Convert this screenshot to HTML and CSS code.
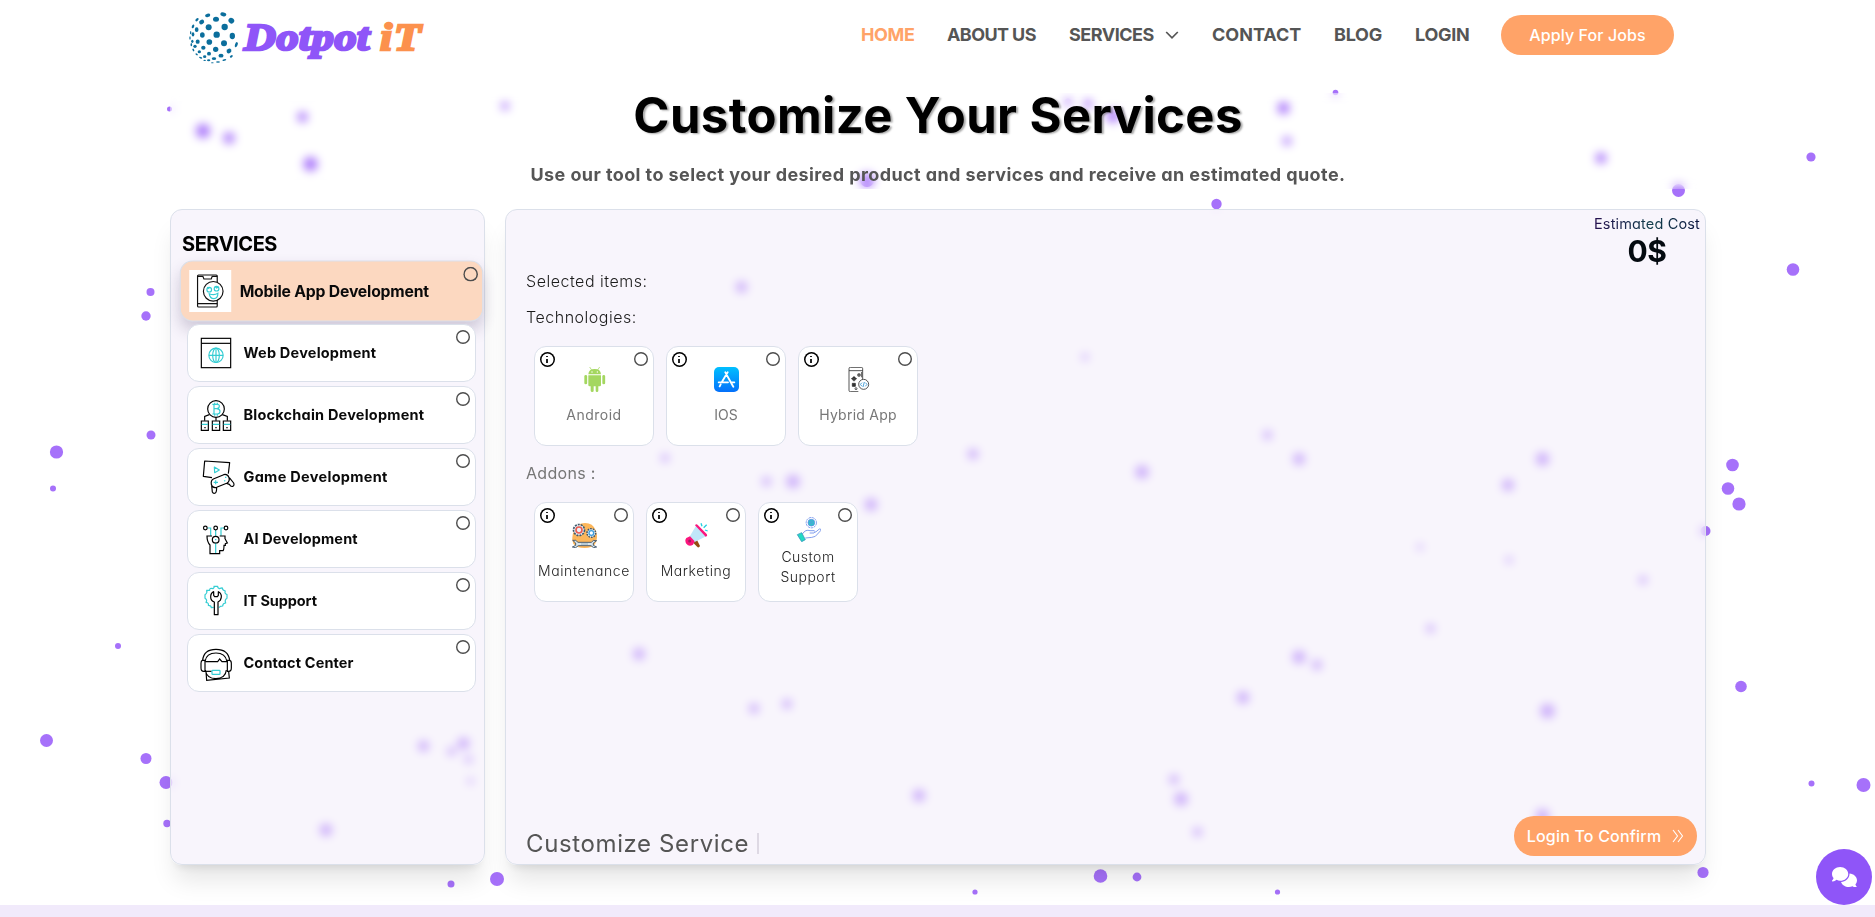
FILE: index.html
```html
<!DOCTYPE html>
<html lang="en">
<head>
<meta charset="utf-8">
<title>Dotpot iT - Customize Your Services</title>
<link rel="stylesheet" href="styles.css">
</head>
<body>
<svg class="particles" viewBox="0 0 1875 905" aria-hidden="true">
<circle cx="169.500" cy="109" r="2.500"/><circle cx="203" cy="131" r="7"/><circle cx="229" cy="138" r="5.5"/><circle cx="302.500" cy="117" r="5"/><circle cx="310.500" cy="164" r="7"/><circle cx="505" cy="106" r="3.7"/>
<circle cx="1068" cy="102" r="3.5"/><circle cx="1088" cy="104" r="4.3"/><circle cx="1113" cy="116" r="6.5"/><circle cx="1283.500" cy="108" r="6"/><circle cx="1287" cy="141" r="4"/><circle cx="867" cy="180" r="7"/><circle cx="1216.500" cy="204" r="5.2"/>
<circle cx="1335.500" cy="92.500" r="2.800"/><circle cx="1601" cy="158" r="5.3"/><circle cx="1678.500" cy="190.500" r="6.5"/><circle cx="1811" cy="157" r="4.6"/><circle cx="1793" cy="269.500" r="6.3"/>
<circle cx="150.500" cy="292" r="4"/><circle cx="146" cy="316" r="4.7"/><circle cx="151" cy="435" r="4.5"/><circle cx="56.500" cy="452" r="6.6"/><circle cx="53" cy="488.500" r="3"/><circle cx="118" cy="646" r="3"/><circle cx="46.500" cy="740.500" r="6.5"/><circle cx="146" cy="758.500" r="5.5"/><circle cx="166" cy="782.500" r="6.5"/><circle cx="167" cy="823.500" r="3.7"/><circle cx="451" cy="884" r="3.5"/><circle cx="497" cy="879" r="7"/>
<circle cx="1732.500" cy="465" r="6.3"/><circle cx="1728" cy="488.500" r="6.3"/><circle cx="1739" cy="504" r="6.6"/><circle cx="1705.500" cy="531" r="5"/><circle cx="1741" cy="686.500" r="5.8"/><circle cx="1811.500" cy="783.500" r="3"/><circle cx="1863.500" cy="785" r="7"/><circle cx="1703" cy="872.500" r="5.6"/><circle cx="1100.500" cy="876" r="6.8"/><circle cx="1137" cy="877" r="4.4"/><circle cx="975" cy="892" r="2.6"/><circle cx="1277.500" cy="892" r="2.6"/>
<circle cx="423.500" cy="746" r="5.5"/><circle cx="463.500" cy="743.500" r="6"/><circle cx="451.500" cy="751.500" r="4.2"/><circle cx="468.500" cy="759.500" r="3.7"/><circle cx="470.500" cy="781" r="3"/><circle cx="326" cy="830" r="6.2"/>
<circle cx="741.500" cy="287" r="5.7"/><circle cx="665" cy="458" r="4"/><circle cx="766.500" cy="481.500" r="4.6"/><circle cx="793" cy="481.500" r="6.8"/><circle cx="871" cy="504.500" r="6.3"/><circle cx="973" cy="454" r="5.3"/><circle cx="1085" cy="357" r="3.3"/><circle cx="1142" cy="472" r="6.8"/><circle cx="1267.500" cy="435" r="4.5"/><circle cx="1299" cy="459" r="6"/><circle cx="1542.500" cy="459" r="6.7"/><circle cx="1508" cy="485" r="6"/><circle cx="1420" cy="547" r="3"/><circle cx="1509" cy="560" r="3.3"/><circle cx="1643" cy="580" r="4"/><circle cx="1430.500" cy="628.500" r="4.2"/><circle cx="1299" cy="657" r="6.6"/><circle cx="1317" cy="665" r="5"/><circle cx="1243" cy="697.500" r="6.2"/><circle cx="1547.500" cy="711" r="7.3"/><circle cx="639" cy="654" r="6"/><circle cx="754" cy="708.500" r="5"/><circle cx="787" cy="704" r="4.8"/><circle cx="919" cy="795.500" r="6.2"/><circle cx="1174" cy="779.500" r="4.8"/><circle cx="1181" cy="799" r="6.8"/><circle cx="1197.500" cy="832" r="4.5"/><circle cx="1542.500" cy="816" r="7"/>
</svg>

<header class="site-header">
  <a class="logo" href="#">
    <svg class="logo-mark" viewBox="84 30 156 162" aria-hidden="true">
      <g fill="#0b6e9c">
      <ellipse cx="190" cy="43" rx="9" ry="6" transform="rotate(15 190 43)"/><ellipse cx="143" cy="46" rx="8" ry="5" transform="rotate(-15 143 46)"/><ellipse cx="168" cy="58" rx="9" ry="7.500"/><ellipse cx="214" cy="62" rx="9" ry="8" transform="rotate(40 214 62)"/><ellipse cx="111" cy="59" rx="6" ry="3.500" transform="rotate(-45 111 59)"/><ellipse cx="125" cy="66" rx="8" ry="6.500" transform="rotate(-35 125 66)"/><circle cx="146" cy="82" r="9"/><circle cx="194" cy="81" r="9.500"/><ellipse cx="99" cy="79" rx="3.500" ry="6" transform="rotate(20 99 79)"/><ellipse cx="110" cy="89" rx="5.500" ry="7"/><ellipse cx="92" cy="98" rx="2" ry="5"/><ellipse cx="99" cy="103" rx="4" ry="6.500"/><ellipse cx="127" cy="105" rx="7" ry="8"/><circle cx="170" cy="104" r="9.500"/><ellipse cx="217" cy="108" rx="8" ry="9.500"/><ellipse cx="90" cy="114" rx="2" ry="5"/><ellipse cx="113" cy="125" rx="6" ry="6.500"/><circle cx="148" cy="126" r="8.500"/><circle cx="192" cy="130" r="9"/><ellipse cx="229" cy="134" rx="4" ry="8" transform="rotate(20 229 134)"/><ellipse cx="97" cy="124" rx="3.500" ry="5"/><ellipse cx="94" cy="134" rx="2.500" ry="5"/><ellipse cx="105" cy="139" rx="5" ry="5"/><ellipse cx="130" cy="143" rx="6.500" ry="6"/><circle cx="167" cy="148" r="8"/><ellipse cx="207" cy="153" rx="7.500" ry="6.500" transform="rotate(-35 207 153)"/><ellipse cx="100" cy="150" rx="2.500" ry="4.500" transform="rotate(-25 100 150)"/><ellipse cx="118" cy="155" rx="5" ry="4.500"/><ellipse cx="147" cy="161" rx="6" ry="5.500"/><ellipse cx="183" cy="167" rx="7.500" ry="5.500"/><ellipse cx="214" cy="169" rx="5" ry="3" transform="rotate(-35 214 169)"/><ellipse cx="110" cy="163" rx="4" ry="2.500" transform="rotate(35 110 163)"/><ellipse cx="134" cy="170" rx="5" ry="4"/><ellipse cx="162" cy="176" rx="6.500" ry="4"/><ellipse cx="122" cy="173" rx="5" ry="2.500" transform="rotate(20 122 173)"/><ellipse cx="193" cy="180" rx="6" ry="2.500" transform="rotate(-15 193 180)"/><ellipse cx="146" cy="181" rx="5" ry="3"/><ellipse cx="174" cy="186" rx="6" ry="2"/><ellipse cx="134" cy="181" rx="4" ry="2"/><ellipse cx="157" cy="188" rx="4" ry="1.500"/>
      </g>
    </svg>
    <span class="logo-name">Dotpot</span><span class="logo-it">iT</span>
  </a>
  <nav class="nav">
    <a class="nav-link nav-link--active nav-home" href="#">HOME</a>
    <a class="nav-link nav-about" href="#">ABOUT US</a>
    <a class="nav-link nav-services" href="#">SERVICES<svg class="caret" viewBox="0 0 14 8"><path d="M1.200 1L7 6.800 12.800 1" fill="none" stroke="#555" stroke-width="1.700"/></svg></a>
    <a class="nav-link nav-contact" href="#">CONTACT</a>
    <a class="nav-link nav-blog" href="#">BLOG</a>
    <a class="nav-link nav-login" href="#">LOGIN</a>
    <a class="btn btn-apply" href="#"><span>Apply For Jobs</span></a>
  </nav>
</header>

<main class="page">
  <section class="hero">
    <h1 class="title">Customize Your Services</h1>
    <p class="subtitle">Use our tool to select your desired product and services and receive an estimated quote.</p>
  </section>

  <div class="columns">
    <aside class="panel services">
      <h2 class="services-title">SERVICES</h2>
      <ul class="service-list">
        <li class="service service--selected">
          <svg class="service-icon" viewBox="72 195 126 126" fill="none" stroke="#111" stroke-width="3.500">
            <rect x="97" y="210" width="59" height="96" rx="3"/><path d="M97 214H113L116 222H138L141 214H156M97 296H156"/>
            <circle cx="144" cy="259" r="29.500" fill="#fff"/>
            <g stroke="#35cdd3"><circle cx="132" cy="254" r="7"/><circle cx="154" cy="251" r="7"/><path d="M132 266Q146 272 158 265Q158 281 146 281Q134 281 132 266Z"/><path d="M126 247L132 251M150 244L154 249 160 246"/></g>
          </svg>
          <span class="service-name n1">Mobile App Development</span><i class="radio"></i>
        </li>
        <li class="service">
          <svg class="service-icon" viewBox="102 393 102 102" fill="none" stroke="#000" stroke-width="3.500">
            <rect x="109" y="400" width="88" height="88"/><path d="M109 415H197"/>
            <g stroke="#35cdd3"><circle cx="153" cy="451" r="21.500"/><ellipse cx="153" cy="451" rx="10" ry="21.500"/><path d="M132 451H174M153 430V472"/></g>
          </svg>
          <span class="service-name n2">Web Development</span><i class="radio"></i>
        </li>
        <li class="service">
          <svg class="service-icon" viewBox="102 579 102 102" fill="none" stroke="#000" stroke-width="3.500">
            <circle cx="153" cy="612" r="25"/><path d="M133 629L119 634V647M172 629L187 634V647M153 637V647"/>
            <path d="M109 648H130V676H109ZM142 648H164V676H142ZM175 648H197V676H175Z"/><path d="M118 668H122M151 668H155M184 668H188"/>
            <g stroke="#35cdd3"><path d="M110 658H129M143 658H163M176 658H196"/><path d="M142 598H156Q164 598 163 604Q162 611 155 611H147M155 611Q165 612 165 619Q165 627 157 627H142M147 598V627M149 593V598M157 593V598M149 627V632M157 627V632"/></g>
          </svg>
          <span class="service-name n3">Blockchain Development</span><i class="radio"></i>
        </li>
        <li class="service">
          <svg class="service-icon" viewBox="102 60 102 102" fill="none" stroke="#000" stroke-width="3.500" stroke-linejoin="round">
            <path d="M141 113L115 109 119 63 194 68 190 101"/>
            <path d="M145 117L176 104Q188 101 192 113Q195 125 185 130L155 142Q142 145 139 133Q137 121 145 117ZM193 113L206 129Q209 137 203 139Q198 141 193 133L185 130M140 137L142 156Q145 162 151 159Q155 157 155 142"/>
            <g stroke="#35cdd3"><path d="M148 81L163 90 149 98ZM146 127H159M152 121V133M175 117V117.100M180 112L184 112M177 123L181 122"/></g>
          </svg>
          <span class="service-name n4">Game Development</span><i class="radio"></i>
        </li>
        <li class="service">
          <svg class="service-icon" viewBox="102 246 102 102" fill="none" stroke="#000" stroke-width="3.600">
            <g stroke="#35cdd3"><path d="M128 264H137V287M177 264H168V287M152 270V290M152 308V341"/></g>
            <circle cx="121" cy="264" r="5.500"/><circle cx="152" cy="264" r="5.500"/><circle cx="183" cy="264" r="5.500"/>
            <path d="M141 288H126Q126 306 135 315V341H164V332H174Q177 330 177 316H181V311L187 309L180 296V288H164"/><circle cx="152" cy="299" r="10"/><path d="M150 299H154" stroke="#35cdd3"/>
          </svg>
          <span class="service-name n5">AI Development</span><i class="radio"></i>
        </li>
        <li class="service">
          <svg class="service-icon" viewBox="102 432 102 102" fill="none" stroke-width="3.600" stroke-linejoin="round">
            <path stroke="#35cdd3" d="M146 502L139 503Q139 496 130 496Q132 488 123 487Q128 480 120 475L120 464Q128 459 125 451H134Q133 443 144 446Q149 443 147 439H158Q157 443 163 446Q171 443 172 444Q172 451 181 453Q177 460 186 464V475Q178 479 182 489Q173 490 173 498L166 499 162 503"/>
            <path stroke="#000" d="M146 455V466L149 470H157L160 466V455Q170 460 169 471Q168 482 159 486V524H148V486Q137 482 137 471Q137 459 146 455Z"/>
          </svg>
          <span class="service-name n6">IT Support</span><i class="radio"></i>
        </li>
        <li class="service">
          <svg class="service-icon" viewBox="102 618 102 102" fill="none" stroke="#000" stroke-width="3.500">
            <path d="M113 661Q116 628 153 628Q190 628 194 661M120 664Q124 639 153 639Q181 639 186 664"/>
            <path d="M120 661H112Q108 662 108 670V684Q108 694 116 694H120ZM187 661H194Q199 662 199 670V684Q199 694 191 694H187Z"/>
            <path d="M121 665H158L164 657L171 665H187M121 690Q125 716 153 716Q182 714 184 690M123 695L125 721 193 714 191 695"/>
            <path d="M120 694H140"/><rect x="141" y="691" width="24" height="12" rx="2" stroke="#35cdd3" fill="#fff"/>
          </svg>
          <span class="service-name n7">Contact Center</span><i class="radio"></i>
        </li>
      </ul>
    </aside>

    <section class="panel builder">
      <div class="cost">
        <span class="cost-label">Estimated Cost</span>
        <strong class="cost-value">0$</strong>
      </div>
      <p class="row-label l-selected">Selected items:</p>
      <p class="row-label l-tech">Technologies:</p>
      <div class="cards">
        <div class="card card--tech">
          <i class="info"></i><i class="radio"></i>
          <svg class="card-icon" viewBox="245 351 75 75" fill="#a4d760"><path d="M264 373Q265 357 283 357Q301 357 302 373ZM264 376H302V405Q302 409 298 409H294V422Q294 426 290 426Q286 426 286 422V409H280V422Q280 426 276 426Q271 426 271 422V409H268Q264 409 264 405Z"/><rect x="252" y="375" width="8.500" height="28" rx="4.200"/><rect x="306" y="375" width="8.500" height="28" rx="4.200"/><path d="M268 351L274 360M298 351L292 360" stroke="#a4d760" stroke-width="2.200"/><circle cx="275" cy="366" r="2" fill="#fff"/><circle cx="291" cy="366" r="2" fill="#fff"/></svg>
          <span class="card-name c1">Android</span>
        </div>
        <div class="card card--tech">
          <i class="info"></i><i class="radio"></i>
          <svg class="card-icon" viewBox="642 351 75 75"><defs><linearGradient id="sky" x2="0" y2="1"><stop stop-color="#00bfff"/><stop offset="1" stop-color="#0470fa"/></linearGradient></defs><rect x="642" y="351" width="75" height="75" rx="15" fill="url(#sky)"/><path d="M676 367L697 405M683 367L666 395M656 397H684M692 397H703M662 403L659 409M697 405L700 410" fill="none" stroke="#fff" stroke-width="5.500" stroke-linecap="round"/></svg>
          <span class="card-name c2">IOS</span>
        </div>
        <div class="card card--tech">
          <i class="info"></i><i class="radio"></i>
          <svg class="card-icon" viewBox="1037 351 75 75" fill="none" stroke="#333" stroke-width="2.500"><path d="M1074 425H1050Q1046 425 1046 421V356Q1046 352 1050 352H1083Q1087 352 1087 356V388M1046 362H1087"/><circle cx="1061" cy="386" r="4" stroke-width="4"/><circle cx="1076" cy="375" r="3.500" stroke-width="3.500"/><path d="M1056 400H1065V409H1056Z" fill="#333"/><circle cx="1067" cy="416" r="3"/><path d="M1052 386H1070M1061 378V394M1084 366V382"/><circle cx="1090" cy="403" r="15" fill="#fff"/><path d="M1085 398L1080 403 1085 409M1095 398L1100 403 1095 409M1092 396L1088 411" stroke="#2b8fd0"/></svg>
          <span class="card-name c3">Hybrid App</span>
        </div>
      </div>
      <p class="row-label l-addons">Addons :</p>
      <div class="cards">
        <div class="card card--addon">
          <i class="info"></i><i class="radio"></i>
          <svg class="card-icon" viewBox="216 219 75 75"><path d="M220 281Q212 262 224 238Q232 219 255 219Q279 219 287 241Q296 263 285 283Q276 294 254 294Q230 294 220 281Z" fill="#fcb65a"/><circle cx="237" cy="240" r="16.500" fill="#e8f0f5" stroke="#41586c" stroke-width="5" stroke-dasharray="6 3"/><circle cx="237" cy="240" r="9" fill="#eaf2f7" stroke="#eb5b50" stroke-width="5"/><circle cx="274" cy="249" r="13" fill="#e8f0f5" stroke="#41586c" stroke-width="4.500" stroke-dasharray="5 3"/><circle cx="274" cy="249" r="7" fill="#fff" stroke="#3d9edc" stroke-width="4"/><path d="M218 271Q228 268 234 277H274Q279 268 290 272L280 279V286L290 291Q280 297 273 287H235Q228 297 217 291L227 286V279Z" fill="#d9e6ed" stroke="#34495e" stroke-width="2.500"/><path d="M243 282H264" stroke="#7794a8" stroke-width="2"/></svg>
          <span class="card-name c4">Maintenance</span>
        </div>
        <div class="card card--addon">
          <i class="info"></i><i class="radio"></i>
          <svg class="card-icon" viewBox="551 219 75 75"><path d="M576 276L590 270 599 288Q597 293 592 292Z" fill="#944c12"/><path d="M588 226L619 258 577 279 565 265Z" fill="#c0e6fa"/><path d="M584 226Q588 220 593 226L619 252Q623 258 616 260Z" fill="#fb157d"/><path d="M558 264L569 259 583 274 578 284Q566 292 558 281Q552 272 558 264Z" fill="#fb157d"/><circle cx="568" cy="273" r="4.500" fill="#9e1f60"/><path d="M602 220L605 229M619 224L610 233M614 240L622 243" stroke="#26cfe0" stroke-width="4"/></svg>
          <span class="card-name c5">Marketing</span>
        </div>
        <div class="card card--addon card--two-line">
          <i class="info"></i><i class="radio"></i>
          <svg class="card-icon" viewBox="887 201 75 75" fill="none" stroke="#6387e8" stroke-width="2.400" stroke-linejoin="round"><circle cx="933" cy="218" r="15.500" stroke-dasharray="7 2"/><circle cx="933" cy="218" r="10" fill="#2bc9c5"/><circle cx="933" cy="217" r="4"/><path d="M906 252Q916 237 929 242H942Q947 245 941 249H928M945 247L957 237Q964 236 961 242L945 259Q938 263 915 264"/><path d="M891 254L904 248 915 269 904 275Z" fill="#22dac4" stroke="#3b95bd"/></svg>
          <span class="card-name c6">Custom<br>Support</span>
        </div>
      </div>
      <div class="builder-footer">
        <p class="typed">Customize Service</p><i class="cursor"></i>
        <a class="btn btn-confirm" href="#"><span>Login To Confirm</span><svg class="arrows" viewBox="0 0 12 14"><path d="M1 1L5.500 7 1 13M6 1L10.500 7 6 13" fill="none" stroke="#fff" stroke-width="1.100"/></svg></a>
      </div>
    </section>
  </div>
</main>
<div class="next-section"></div>
<a class="chat" href="#" aria-label="Chat"><svg viewBox="0 0 640 512" fill="#fff"><path d="M208 352c115 0 208-79 208-176S323 0 208 0 0 79 0 176c0 39 15 74 40 103-3 19-12 35-21 49-5 7-10 12-13 15-3 3-5 5-5 5-7 7-4 20 9 20 28 0 56-10 80-23 11-6 21-12 28-18 27 16 59 25 90 25zM448 176c0 112-99 194-217 207 25 75 107 129 201 129 34 0 66-7 94-19 8 5 17 11 28 17 24 13 52 23 80 23 8 0 13-14 5-20 0 0-2-2-5-5-3-3-8-8-13-15-9-14-18-30-21-49 25-29 40-64 40-103 0-92-85-168-192-175 0 3 0 7 0 10z"/></svg></a>
</body>
</html>
```
FILE: styles.css
```css
* { box-sizing: border-box; }
body { margin: 0; height: 917px; overflow: hidden; background: #fff; font-family: Inter, "Open Sans", sans-serif; font-feature-settings: "cv11"; display: flex; flex-direction: column; position: relative; }
a { color: inherit; text-decoration: none; }
h1, h2, p, ul { margin: 0; padding: 0; }
li { list-style: none; }

.particles { position: absolute; left: 0; top: 0; width: 1875px; height: 905px; fill: #a671fa; }

.site-header { position: relative; height: 70px; padding: 0 201px 0 188px; display: flex; justify-content: space-between; align-items: flex-start; }
.logo { display: flex; align-items: flex-start; padding-top: 10px; font: italic bold 38px/1 "Liberation Serif", serif; }
.logo-mark { width: 52px; height: 54px; }
.logo-name, .logo-it { margin-top: 9px; line-height: 36px; transform: scaleX(1.16); transform-origin: 0 50%; }
.logo-name { margin-left: 4px; color: #8f55f8; -webkit-text-stroke: 2.600px #8f55f8; letter-spacing: .500px; width: 136px; }
.logo-it { color: #fc914d; -webkit-text-stroke: 2.300px #fc914d; letter-spacing: 1.500px; }

.nav { display: flex; align-items: center; height: 40px; margin-top: 15px; }
.nav-link { font-size: 18px; font-weight: 700; line-height: 40px; color: #555; white-space: nowrap; display: flex; align-items: center; }
.nav-link--active { color: #ffa368; }
.nav-home { width: 86px; letter-spacing: -.400px; }
.nav-about { width: 122px; letter-spacing: -.600px; }
.nav-services { width: 143px; letter-spacing: -.500px; }
.nav-contact { width: 122px; letter-spacing: 0; }
.nav-blog { width: 81px; letter-spacing: -.250px; }
.nav-login { width: 86px; letter-spacing: -.250px; }
.caret { width: 14px; height: 8px; margin-left: 11px; }
.btn { display: flex; align-items: center; justify-content: center; height: 40px; border-radius: 20px; background: #ffa368; color: #fff; font-size: 16px; font-weight: 500; white-space: nowrap; letter-spacing: .100px; }
.btn-apply { width: 173px; }
.btn span { margin-top: -1px; }

.page { position: relative; width: 1536px; margin-left: 170px; padding-top: 23px; height: 835px; flex: none; }
.hero { height: 96px; text-align: center; backdrop-filter: blur(5px); white-space: nowrap; }
.title { font-size: 49px; font-weight: 700; line-height: 46px; letter-spacing: .400px; color: #000; text-shadow: 2px 1px 2px rgba(0, 0, 0, .35); }
.subtitle { margin-top: 24px; font-size: 18px; font-weight: 700; line-height: 24px; letter-spacing: .410px; color: #555; }

.columns { display: flex; gap: 20px; margin-top: 20px; height: 656px; }
.panel { border: 1px solid #dbe0ea; border-radius: 12px; background: rgba(241, 236, 250, .5); backdrop-filter: blur(5px); box-shadow: 0 20px 25px -5px rgba(0, 0, 0, .1), 0 8px 10px -6px rgba(0, 0, 0, .1); }
.services { width: 315px; padding: 19px 8px 0 16px; }
.services-title { margin-left: -5px; font-size: 20px; font-weight: 700; line-height: 30px; letter-spacing: -.450px; color: #000; }
.service-list { display: flex; flex-direction: column; gap: 4px; margin-top: 3px; }
.service { position: relative; display: flex; align-items: center; height: 58px; padding-left: 11px; border: 1px solid #dbe0ea; border-radius: 12px; background: #fff; }
.service--selected { padding-left: 8px; background: #fcd8c0; transform: scale(1.05); box-shadow: 0 8px 14px rgba(60, 40, 90, .22); }
.service-icon { width: 34px; height: 34px; overflow: visible; flex: none; }
.service--selected .service-icon { width: 40px; height: 40px; background: #fff; }
.service-name { margin: -1px 0 0 10.500px; font-size: 14.500px; font-weight: 700; color: #0a0a0a; white-space: nowrap; letter-spacing: .210px; }
.service--selected .service-name { margin: 0 0 0 8px; font-size: 15px; letter-spacing: -.180px; }
.n4 { letter-spacing: .300px; }
.n5, .n7 { letter-spacing: .130px; }
.n6 { letter-spacing: -.100px; }
.radio { position: absolute; right: 5px; top: 5px; width: 14px; height: 14px; border-radius: 50%; box-shadow: inset 0 0 0 1.400px #4c4c4c; }
.service--selected .radio { right: 4px; }

.builder { flex: 1; padding: 4px 5px 0 20px; display: flex; flex-direction: column; }
.cost { align-self: flex-end; width: 106px; display: flex; flex-direction: column; align-items: center; white-space: nowrap; }
.cost-label { font-size: 14.5px; line-height: 20px; letter-spacing: .150px; background: linear-gradient(90deg, #26104f, #123f4c 55%, #0d1540); -webkit-background-clip: text; background-clip: text; color: transparent; }
.cost-value { font-size: 30px; font-weight: 700; line-height: 34px; letter-spacing: -.500px; color: #040a10; }
.row-label { font-size: 16px; font-weight: 350; line-height: 24px; color: #1b1b1b; align-self: flex-start; white-space: nowrap; position: relative; top: -1px; letter-spacing: .520px; }
.l-selected { margin-top: 2px; }
.l-tech { margin-top: 12px; }
.l-addons { margin-top: 16px; font-weight: 400; color: #777; letter-spacing: .300px; }
.cards { display: flex; gap: 12px; margin: 16px 0 0 8px; }
.card { position: relative; width: 120px; height: 100px; padding-top: 20px; border: 1px solid #dbe0ea; border-radius: 12px; background: #fff; display: flex; flex-direction: column; align-items: center; }
.card--addon { width: 100px; }
.card--two-line { padding-top: 14px; }
.card-icon { width: 25px; height: 25px; flex: none; }
.card-name { margin-top: 13px; font-size: 14px; line-height: 20px; color: #777; text-align: center; white-space: nowrap; }
.c1 { letter-spacing: .500px; }
.c3 { letter-spacing: .250px; }
.card--addon .card-name { color: #242424; font-weight: 350; letter-spacing: .570px; }
.card--two-line .card-name { margin-top: 5px; letter-spacing: .500px; }
.info { position: absolute; left: 4.500px; top: 4.500px; width: 15px; height: 15px; border-radius: 50%; box-shadow: inset 0 0 0 1.500px #000; }
.info::before { content: ""; position: absolute; left: 6.700px; top: 4px; width: 1.600px; height: 1.600px; background: #222; }
.info::after { content: ""; position: absolute; left: 6.700px; top: 7px; width: 1.600px; height: 4px; background: #222; }
.builder-footer { display: flex; margin: auto 3px 7px 0; align-items: center; }
.typed { padding-top: 16px; font-size: 24px; line-height: 26px; font-weight: 370; letter-spacing: .620px; color: #555; white-space: nowrap; }
.cursor { width: 2px; height: 21px; margin: 15px 0 0 8px; background: #ded9e4; }
.btn-confirm { width: 183px; margin-left: auto; position: relative; letter-spacing: .200px; }
.arrows { width: 12px; height: 14px; margin-left: 11px; }

.next-section { flex: none; height: 12px; background: #f1eafb; }
.chat { position: absolute; left: 1816px; top: 849px; width: 56px; height: 56px; border-radius: 50%; background: #8f55f8; display: flex; align-items: center; justify-content: center; }
.chat svg { width: 25px; height: 20px; }
```
